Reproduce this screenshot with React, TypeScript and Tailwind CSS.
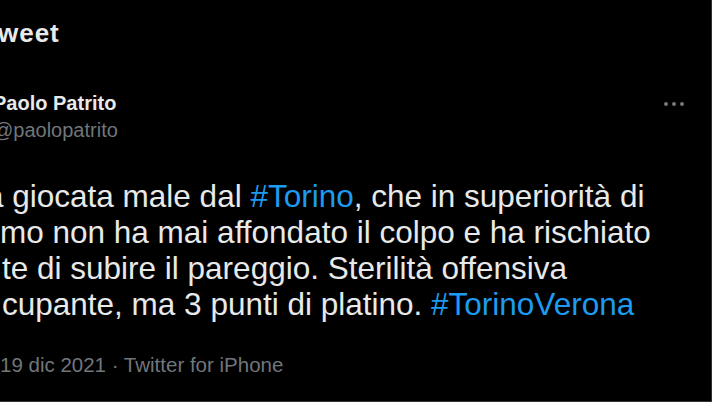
import React from "react";

const lines = [
  { lead: "-ml-[14px]", parts: [{ t: "a giocata male dal " }, { t: "#Torino", tag: true }, { t: ", che in superiorità di" }] },
  { lead: "ml-0", parts: [{ t: "mo non ha mai affondato il colpo e ha rischiato" }] },
  { lead: "ml-[2px]", parts: [{ t: "te di subire il pareggio. Sterilità offensiva" }] },
  { lead: "ml-[2px]", parts: [{ t: "cupante, ma 3 punti di platino. " }, { t: "#TorinoVerona", tag: true }] },
];

const App = () => {
  return (
    <div
      className="w-[712px] h-[402px] bg-black overflow-hidden border-r border-b border-[#2f3336] text-[#e7e9ea]"
      style={{ fontFamily: '"Liberation Sans", Arial, sans-serif' }}
    >
      {/* header */}
      <div className="pt-[19px]">
        <h1 className="-ml-[17px] text-[26px] leading-[28px] font-bold tracking-[1px] whitespace-nowrap">Tweet</h1>
      </div>

      {/* author */}
      <div className="mt-[45px] flex items-start justify-between pr-[27px]">
        <div className="whitespace-nowrap">
          <p className="-ml-[7px] text-[20px] leading-[22px] font-bold">Paolo Patrito</p>
          <p className="-ml-[7px] mt-[5px] text-[20px] leading-[22px] text-[#71767b]">@paolopatrito</p>
        </div>
        <div className="flex gap-[4px] mt-[10px]">
          <span className="w-[4px] h-[4px] rounded-full bg-[#71767b]" />
          <span className="w-[4px] h-[4px] rounded-full bg-[#71767b]" />
          <span className="w-[4px] h-[4px] rounded-full bg-[#71767b]" />
        </div>
      </div>

      {/* tweet text */}
      <div className="mt-[37px] text-[31.5px] leading-[36px] whitespace-nowrap">
        {lines.map((line, i) => (
          <div key={i} className={line.lead}>
            {line.parts.map((p, j) => (
              <span key={j} className={p.tag ? "text-[#1d9bf0]" : ""}>
                {p.t}
              </span>
            ))}
          </div>
        ))}
      </div>

      {/* meta */}
      <div className="mt-[31px] text-[20.5px] leading-[24px] text-[#71767b] whitespace-nowrap">
        19 dic 2021 · Twitter for iPhone
      </div>
    </div>
  );
};

export default App;
